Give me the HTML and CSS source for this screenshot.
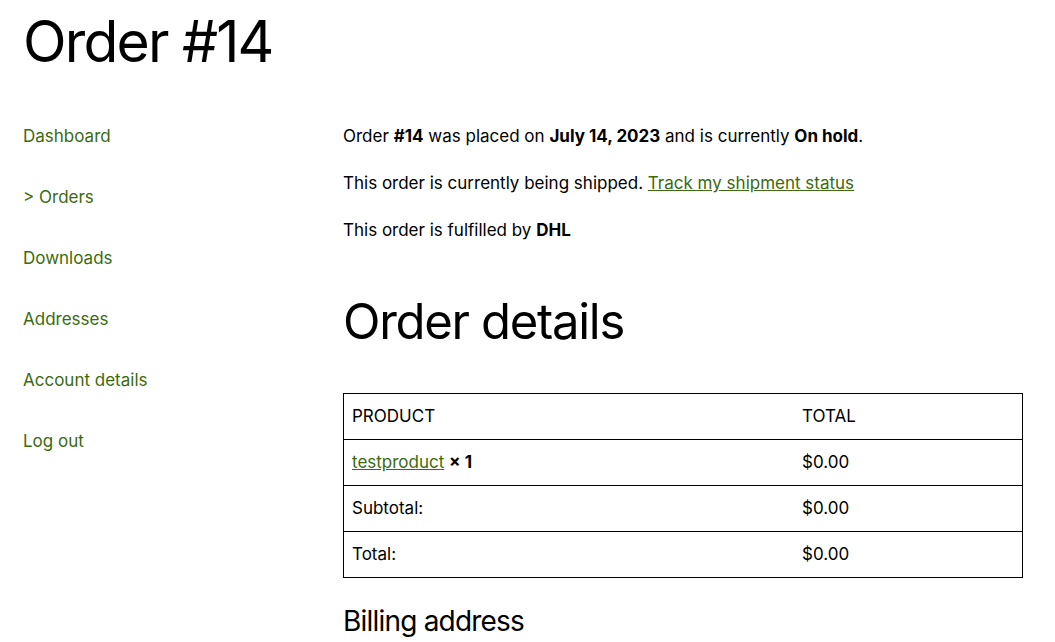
FILE: index.html
```html
<!DOCTYPE html>
<html lang="en">
<head>
<meta charset="utf-8">
<title>Order #14</title>
<link rel="stylesheet" href="styles.css">
</head>
<body>
<div class="page">
  <h1 class="page-title">Order #14</h1>
  <div class="account">
    <nav class="account-nav">
      <a href="#">Dashboard</a>
      <a href="#">&gt; Orders</a>
      <a href="#">Downloads</a>
      <a href="#">Addresses</a>
      <a href="#">Account details</a>
      <a href="#">Log out</a>
    </nav>
    <main class="account-content">
      <p>Order <b>#14</b> was placed on <b>July 14, 2023</b> and is currently <b>On hold</b>.</p>
      <p>This order is currently being shipped. <a href="#" class="link">Track my shipment status</a></p>
      <p>This order is fulfilled by <b>DHL</b></p>
      <h2 class="section-title">Order details</h2>
      <table class="order-table">
        <thead>
          <tr><th class="col-product">PRODUCT</th><th>TOTAL</th></tr>
        </thead>
        <tbody>
          <tr><td><a href="#" class="link">testproduct</a> <b>× 1</b></td><td>$0.00</td></tr>
          <tr><td>Subtotal:</td><td>$0.00</td></tr>
          <tr><td>Total:</td><td>$0.00</td></tr>
        </tbody>
      </table>
      <h3 class="sub-title">Billing address</h3>
    </main>
  </div>
</div>
</body>
</html>
```
FILE: styles.css
```css
html, body {
  margin: 0;
  padding: 0;
  background: #fff;
}
body {
  font-family: Inter, "Noto Sans", sans-serif;
  color: #000;
  font-size: 17px;
}
.page {
  padding: 0 32px 0 23px;
}
.page-title {
  font-size: 57px;
  font-weight: 400;
  line-height: 1.2;
  margin: 8px 0 0;
  letter-spacing: -1.8px;
}
.account {
  display: grid;
  grid-template-columns: 320px 1fr;
  margin-top: 50px;
}
.account-nav {
  display: flex;
  flex-direction: column;
  gap: 40px;
}
.account-nav a {
  color: #3a6b0e;
  text-decoration: none;
  line-height: 21px;
}
.account-content p {
  margin: 0 0 26px;
  line-height: 21px;
}
.account-content b {
  font-weight: 700;
}
.link {
  color: #3a6b0e;
  text-decoration: underline;
}
.section-title {
  font-size: 49px;
  font-weight: 400;
  letter-spacing: -1.3px;
  line-height: 1.2;
  margin: 52px 0 41px;
}
.order-table {
  width: 100%;
  border-collapse: collapse;
  border: 1px solid #000;
}
.order-table th,
.order-table td {
  border-top: 1px solid #000;
  text-align: left;
  font-weight: 400;
  padding: 12px 8px;
  line-height: 21px;
}
.col-product {
  width: 434px;
}
.sub-title {
  font-size: 28px;
  font-weight: 400;
  letter-spacing: -0.8px;
  margin: 27px 0 0;
  line-height: 1.2;
}
```
